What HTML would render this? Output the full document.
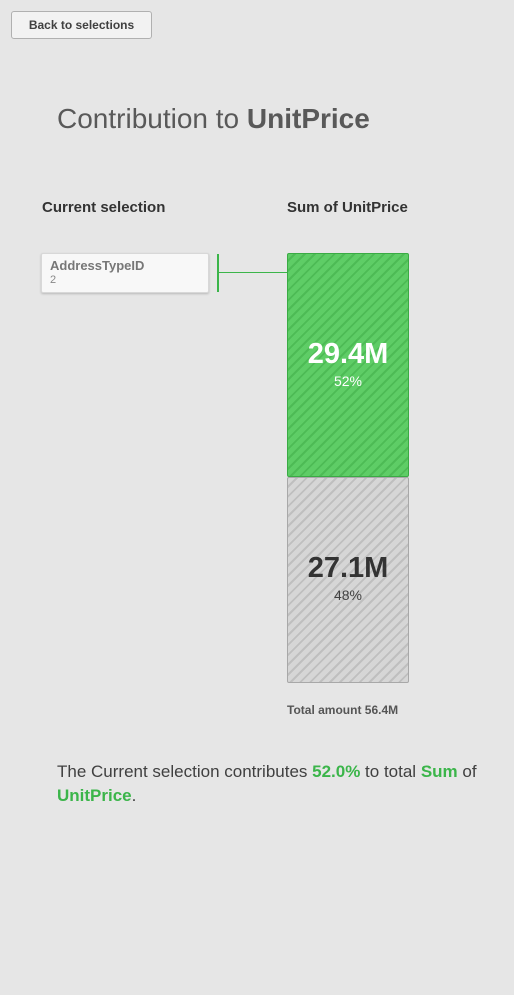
<!DOCTYPE html>
<html><head><style>
body{margin:0;width:514px;height:995px;background:#e6e6e6;font-family:"Liberation Sans",sans-serif;position:relative;overflow:hidden;color:#404040}
.a{position:absolute}
.btn{left:11px;top:11px;width:139px;height:26px;border:1px solid #b0b0b0;border-radius:3px;background:#f2f2f2;font-size:12px;font-weight:bold;line-height:26px;text-align:center;color:#404040}
.bar{left:287px;width:120px;border:1px solid;border-radius:2px;text-align:center}
.g{top:253px;height:222px;border-color:#3aab44;background:repeating-linear-gradient(-45deg,#5ecd66 0 5px,#4dbb55 5px 7px)}
.gr{top:477px;height:204px;border-color:#a8a8a8;background:repeating-linear-gradient(-45deg,#d6d6d6 0 5px,#bfbfbf 5px 7px)}
</style></head><body>
<div class="a btn">Back to selections</div>
<div class="a" style="left:57px;top:103px;font-size:28px;color:#595959">Contribution to <b>UnitPrice</b></div>
<div class="a" style="left:42px;top:199px;font-size:15px;font-weight:bold;color:#333">Current selection</div>
<div class="a" style="left:287px;top:199px;font-size:15px;font-weight:bold;color:#333">Sum of UnitPrice</div>
<div class="a" style="left:41px;top:253px;width:166px;height:38px;background:#f8f8f8;border:1px solid #d8d8d8;box-shadow:0 1px 2px rgba(0,0,0,.2);border-radius:2px">
<div style="position:absolute;left:8px;top:4px;font-size:13px;font-weight:bold;color:#777">AddressTypeID</div>
<div style="position:absolute;left:8px;top:20px;font-size:11px;color:#888">2</div></div>
<div class="a" style="left:217px;top:254px;width:2px;height:38px;background:#3bb54a"></div>
<div class="a" style="left:219px;top:272px;width:68px;height:1px;background:#3bb54a"></div>
<div class="a bar g"><div style="margin-top:84px;font-size:29px;font-weight:bold;color:#fff">29.4M</div><div style="font-size:14px;color:#fff;margin-top:2px">52%</div></div>
<div class="a bar gr"><div style="margin-top:74px;font-size:29px;font-weight:bold;color:#333">27.1M</div><div style="font-size:14px;color:#404040;margin-top:2px">48%</div></div>
<div class="a" style="left:287px;top:703px;font-size:12px;font-weight:bold;color:#555">Total amount 56.4M</div>
<div class="a" style="left:57px;top:760px;width:445px;font-size:17px;line-height:24px;color:#404040">The Current selection contributes <b style="color:#3bb54a">52.0%</b> to total <b style="color:#3bb54a">Sum</b> of <b style="color:#3bb54a">UnitPrice</b>.</div>
</body></html>
